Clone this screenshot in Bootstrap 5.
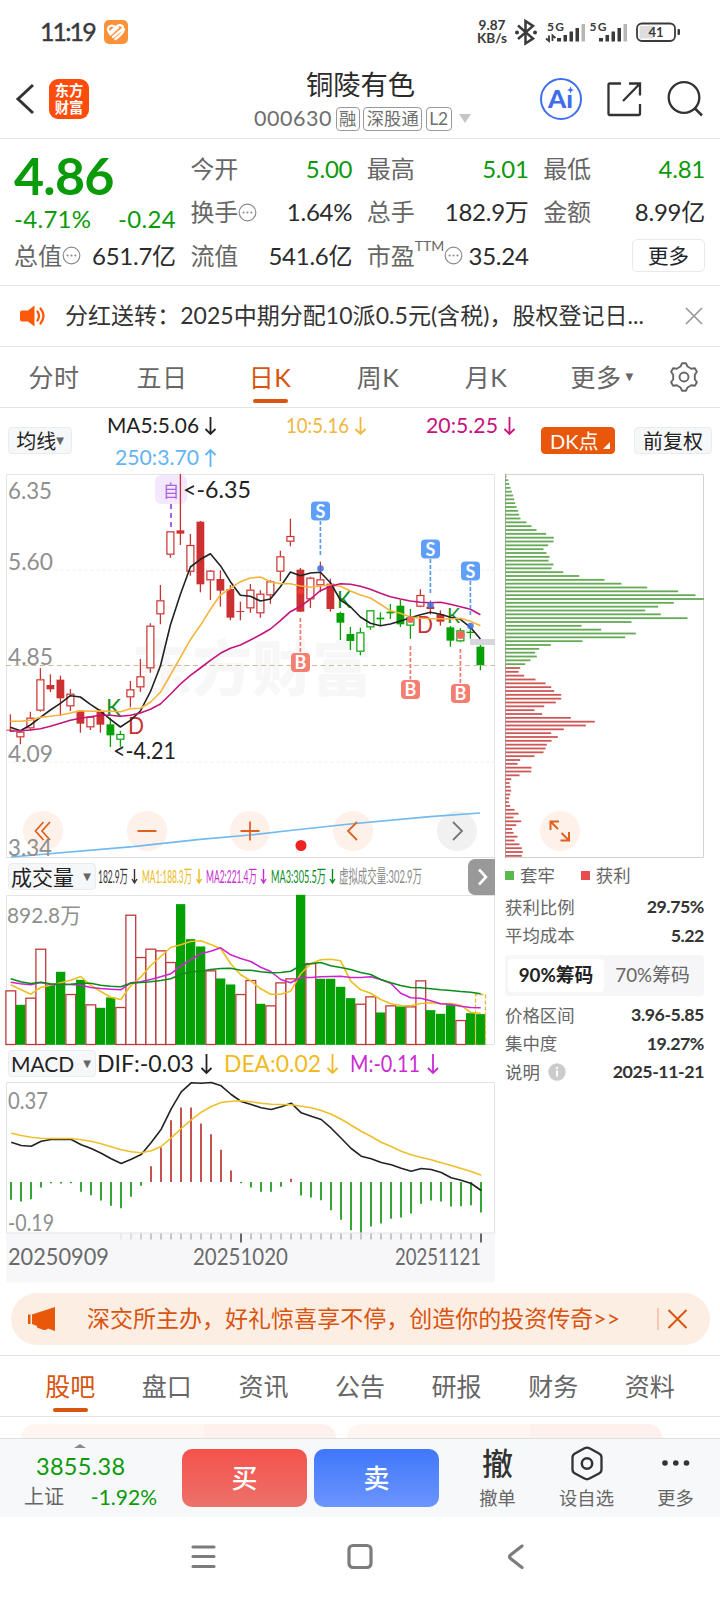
<!DOCTYPE html>
<html lang="zh-CN">
<head>
<meta charset="utf-8">
<meta name="viewport" content="width=device-width, initial-scale=1">
<title>铜陵有色 000630</title>
<link href="https://cdn.jsdelivr.net/npm/bootstrap@5.3.0/dist/css/bootstrap.min.css" rel="stylesheet">
<style>
  body{font-family:Lato,"Noto Sans CJK SC",sans-serif;color:#2b2b2b;background:#fff;width:720px;line-height:1;overflow-x:hidden}
  svg{display:block;flex:none;overflow:visible}
  svg text{font-family:Lato,"Noto Sans CJK SC",sans-serif}
  .dn{color:#0a9a0a}
  .lb{color:#666}
  .org{color:#d9540f}
  .line-b{border-bottom:1px solid #e4e4e4}
  .status{height:60px;padding:3px 37px 0 40px}
  .clock{font-size:25px;letter-spacing:-1.9px;width:64px;color:#3a3a3a;-webkit-text-stroke:.4px #3a3a3a}
  .net{font-size:13.6px;line-height:12.5px;font-weight:700;color:#3a3a3a;margin-right:5px}
  .topbar{height:79px;padding:0 17px 0 15px}
  .logo{width:40px;height:40px;border-radius:9px;background:#ff4c0a;color:#fff;font-weight:700;font-size:14.3px;line-height:17px;padding-top:3px}
  .side{width:186px}
  .stock{font-size:27.3px;color:#2b2b2b;margin-left:-20px}
  .coderow{gap:3.5px;margin:8px 0 0 -16px}
  .code{font-size:21.5px;letter-spacing:.55px;color:#6e6e6e}
  .tag{border:1px solid #999;border-radius:4px;font-size:17.3px;height:24px;padding:0 2.5px;color:#6e6e6e;line-height:21px}
  .quote{height:147px;padding:8px 15px 0 14px;gap:14.5px;font-size:24px}
  .quote>div{flex:1 1 0;min-width:0}
  .quote .cell{height:43.5px}
  .quote .v{letter-spacing:-.25px;white-space:nowrap}
  .price{font-size:52px;font-weight:700;letter-spacing:-.8px;height:57px;line-height:57px}
  .quote .chg{height:30px;font-size:24px}
  .quote .chg .v{letter-spacing:.3px}
  .more{font-size:20.5px;width:73px;height:33px;border:1px solid #e9e9e9;border-radius:5px;padding:0;line-height:1}
  .ttm{font-size:14px;position:relative;top:-10px}
  .notice{height:61px;padding:0 17px 0 20px;font-size:22.8px}
  .ptabs{height:61px;font-size:25px;color:#666;letter-spacing:.5px}
  .ptabs>div{width:108px;height:60px}
  .ul::after{content:"";position:absolute;left:50%;bottom:4px;width:35px;height:4px;margin-left:-17px;border-radius:2px;background:#d9540f}
  .ma{height:65px;padding:0 8px}
  .pill{background:#f6f7f9;border:1px solid #e9ebee;border-radius:4px;font-size:20px;height:27px;line-height:1;padding:0;color:#222}
  .pill-dk{background:#e8570a;border-color:#e8570a;color:#fff}
  .pick{width:88px;font-size:21px;padding:0 4px 0 2px}
  .tri{font-size:10px;color:#666;font-family:"DejaVu Sans"}
  .colL{width:495px}
  .colR{width:225px;padding-right:16px;padding-left:10px}
  .sub{height:37px}
  .kv{height:28.5px;font-size:17.4px}
  .kv b{font-weight:700;font-size:17.8px;color:#333;letter-spacing:-.45px}
  .legend{height:35px}
  .seg{height:41px;background:#f6f6f9;border-radius:4px;padding:4px 3px;font-size:18.8px;margin:5px 0 5px}
  .seg>div{width:96px}
  .seg .on{background:#fff;border-radius:4px;font-weight:700;color:#222}
  .banner{height:52px;margin:11px 10px 10px 11px;border-radius:26px;background:#fdeee4;font-size:23px;padding:0 22px 0 17px}
  .btabs{height:62px;border-top:1px solid #e4e4e4;border-bottom:1px solid #e4e4e4;padding:0 22px;font-size:25px;color:#666}
  .btabs .ul::after{bottom:4px}
  .strip{height:21px;padding:7px 58px 0 21px;gap:11px;overflow:hidden}
  .strip>div{flex:1;height:20px;border-radius:14px 14px 0 0;background:linear-gradient(90deg,#fff6f2 0 58%,#fdf0ed 58%)}
  .dock{height:79px;background:#f7f8fa;border-top:1px solid #dfe0e2}
  .idx{width:182px}
  .trade{width:125px;height:58px;border:0;border-radius:10px;color:#fff;font-size:26px;font-weight:500;padding:0;line-height:1;margin-top:10px}
  .buy{background:linear-gradient(#f4524b,#ec716a)}
  .sell{background:linear-gradient(#3f77fb,#6c95fe)}
  .tool{width:89px;font-size:18.3px;color:#666;padding-top:5px}
  .tool .ic{height:38px;margin-bottom:7px}
</style>
</head>
<body>

<div class="status d-flex align-items-center">
  <span class="clock">11:19</span>
  <svg width="24" height="24" viewBox="0 0 24 24"><rect width="24" height="24" rx="5" fill="#fb923a"/><path d="M12 8C9 4 4 5.500 4 9.500l1.500 3.500L11.500 7M6.500 14.500L14 7.500M9 17L19 8.500C19.500 5 15 4 12 7M11.500 19C15 16.500 18.500 13.500 20 9.500" fill="none" stroke="#fff" stroke-width="2.300" stroke-linecap="round" stroke-linejoin="round"/></svg>
  <div class="net ms-auto text-center">9.87<br>KB/s</div>
  <svg width="171" height="30" viewBox="512 16 171 30">
    <path d="M518 24.500l15 13-7.500 5V20l7.500 5-15 13" fill="none" stroke="#3a3a3a" stroke-width="2.500"/>
    <circle cx="517" cy="31.500" r="2" fill="#3a3a3a"/><circle cx="535" cy="31.500" r="2" fill="#3a3a3a"/>
    <g font-size="12" font-weight="700" fill="#3a3a3a"><text x="547" y="30" textLength="17">5G</text><text x="589.500" y="30" textLength="17">5G</text></g>
    <path d="M549 34.500v5.500l-3-2.500M552.500 40v-5.500l3 2.500" fill="none" stroke="#3a3a3a" stroke-width="1.800"/>
    <path d="M557 37h4v3.500h-4zM563.500 34h3.500v6.500h-3.500zM569.500 30.500h3.500v10h-3.500zM575.500 27h3.500v13.500h-3.500zM599 37h4v3.500h-4zM605.500 34h3.500v6.500h-3.500zM611.500 30.500h3.500v10h-3.500zM617.500 27h3.500v13.500h-3.500z" fill="#3a3a3a"/>
    <path d="M581.500 23h3.500v17.500h-3.500zM623.500 23h3.500v17.500h-3.500z" fill="#b5b5b5"/>
    <rect x="637" y="22.500" width="38" height="17.500" rx="5" fill="none" stroke="#3a3a3a" stroke-width="1.800"/><path d="M639.500 25h14v12.500h-14z" fill="#dedede"/><rect x="677.500" y="28" width="2.500" height="6" rx="1" fill="#3a3a3a"/>
    <text x="648.500" y="36" font-size="13" font-weight="700" textLength="15" fill="#3a3a3a">41</text>
  </svg>
</div>

<div class="topbar d-flex align-items-center line-b">
  <div class="side d-flex align-items-center">
    <svg width="34" height="34" viewBox="0 0 34 34"><path d="M18 3L3 17l15 14" fill="none" stroke="#333" stroke-width="3"/></svg>
    <div class="logo text-center">东方<br>财富</div>
  </div>
  <div class="flex-fill d-flex flex-column align-items-center pt-1">
    <div class="stock">铜陵有色</div>
    <div class="coderow d-flex align-items-center">
      <span class="code">000630</span><span class="tag">融</span><span class="tag">深股通</span><span class="tag">L2</span>
      <svg class="ms-1" width="12" height="9" viewBox="0 0 12 9"><path d="M0 0h12L6 9z" fill="#c6c6c6"/></svg>
    </div>
  </div>
  <div class="d-flex align-items-center" style="gap:25px">
    <svg width="42" height="42" viewBox="0 0 42 42"><circle cx="21" cy="21" r="20" fill="none" stroke="#3f6df0" stroke-width="2"/><text x="8" y="29.500" font-size="24" font-weight="900" fill="#3f6df0" textLength="25" lengthAdjust="spacingAndGlyphs">Aı</text><path d="M30.500 8.500l1 2.500 2.500 1-2.500 1-1 2.500-1-2.500-2.500-1 2.500-1z" fill="#3f6df0"/></svg>
    <svg width="35" height="35" viewBox="0 0 35 35"><path d="M14 1.500H2.500a1 1 0 0 0-1 1V32a1 1 0 0 0 1 1H32a1 1 0 0 0 1-1V22M22 1.500h11v12M33 1.500L16 19" fill="none" stroke="#333" stroke-width="2.300"/></svg>
    <svg width="36" height="36" viewBox="0 0 36 36"><circle cx="17" cy="16.500" r="15.300" fill="none" stroke="#333" stroke-width="2.300"/><path d="M28 27.500l7 7" stroke="#333" stroke-width="2.500"/></svg>
  </div>
</div>

<div class="quote d-flex line-b">
  <div>
    <div class="price dn">4.86</div>
    <div class="chg dn d-flex justify-content-between align-items-center"><span class="v">-4.71%</span><span class="v">-0.24</span></div>
    <div class="cell d-flex align-items-center"><span class="lb">总值</span><svg width="19" height="19" viewBox="0 0 18 18"><use href="#dots"/></svg><span class="v ms-auto">651.7亿</span></div>
  </div>
  <div>
    <div class="cell d-flex align-items-center justify-content-between"><span class="lb">今开</span><span class="v dn">5.00</span></div>
    <div class="cell d-flex align-items-center"><span class="lb">换手</span><svg width="19" height="19" viewBox="0 0 18 18"><use href="#dots"/></svg><span class="v ms-auto">1.64%</span></div>
    <div class="cell d-flex align-items-center justify-content-between"><span class="lb">流值</span><span class="v">541.6亿</span></div>
  </div>
  <div>
    <div class="cell d-flex align-items-center justify-content-between"><span class="lb">最高</span><span class="v dn">5.01</span></div>
    <div class="cell d-flex align-items-center justify-content-between"><span class="lb">总手</span><span class="v">182.9万</span></div>
    <div class="cell d-flex align-items-center"><span class="lb">市盈</span><span class="ttm lb">TTM</span><svg width="19" height="19" viewBox="0 0 18 18"><use href="#dots"/></svg><span class="v ms-auto">35.24</span></div>
  </div>
  <div>
    <div class="cell d-flex align-items-center justify-content-between"><span class="lb">最低</span><span class="v dn">4.81</span></div>
    <div class="cell d-flex align-items-center justify-content-between"><span class="lb">金额</span><span class="v">8.99亿</span></div>
    <div class="cell d-flex align-items-center justify-content-end"><button class="btn more">更多</button></div>
  </div>
</div>
<svg width="0" height="0" class="position-absolute"><defs><g id="dots"><circle cx="9" cy="9" r="7.900" fill="none" stroke="#8a8a8a" stroke-width="1.100"/><g fill="#8a8a8a"><circle cx="5.300" cy="9" r="1"/><circle cx="9" cy="9" r="1"/><circle cx="12.700" cy="9" r="1"/></g></g></defs></svg>

<div class="notice d-flex align-items-center line-b">
  <svg width="26" height="22" viewBox="0 0 26 22"><path d="M2 5.500h6L14.500 0.500v21L8 16.500H2a2 2 0 0 1-2-2v-7a2 2 0 0 1 2-2z" fill="#fa5a0a"/><path d="M17.500 6.500q3 4.500 0 9M20.500 3.500q6 7.500 0 15" fill="none" stroke="#fa5a0a" stroke-width="2.300" stroke-linecap="round"/></svg>
  <svg width="580" height="34" viewBox="66 0 580 34" style="margin-left:20px"><text x="65" y="25" font-size="23" fill="#333" textLength="579">分红送转：2025中期分配10派0.5元(含税)，股权登记日...</text></svg>
  <svg class="ms-auto" width="18" height="18" viewBox="0 0 18 18"><path d="M1 1l16 16M17 1L1 17" stroke="#999" stroke-width="1.700"/></svg>
</div>

<div class="ptabs d-flex line-b">
  <div class="d-flex align-items-center justify-content-center">分时</div>
  <div class="d-flex align-items-center justify-content-center">五日</div>
  <div class="d-flex align-items-center justify-content-center org ul position-relative">日K</div>
  <div class="d-flex align-items-center justify-content-center">周K</div>
  <div class="d-flex align-items-center justify-content-center">月K</div>
  <div class="d-flex align-items-center justify-content-center ps-2 ms-1">更多<span class="tri ms-1">▼</span></div>
  <svg class="my-auto" style="margin-left:17px" width="30" height="30" viewBox="0 0 30 30"><path d="M11.500 4.500L13 1.300h4l1.500 3.200 3.800 2.200 3.600-.5 2 3.600-2.100 2.900v4.600l2.100 2.900-2 3.600-3.600-.5-3.800 2.200L17 28.700h-4l-1.500-3.200-3.800-2.200-3.600.5-2-3.600 2.100-2.900v-4.600L2.100 9.800l2-3.600 3.600.5z" fill="none" stroke="#666" stroke-width="1.900" stroke-linejoin="round"/><circle cx="15" cy="15" r="4.500" fill="none" stroke="#666" stroke-width="1.900"/></svg>
</div>

<div class="ma d-flex align-items-center">
  <button class="btn pill d-flex align-items-center justify-content-center" style="width:64px">均线<span class="tri">▼</span></button>
  <svg width="469" height="65" viewBox="72 408 469 65" font-size="22">
    <text x="107" y="433" fill="#222" textLength="92" lengthAdjust="spacingAndGlyphs">MA5:5.06</text><text x="286" y="433" fill="#efb73f" textLength="63" lengthAdjust="spacingAndGlyphs">10:5.16</text><text x="426" y="433" fill="#c8127f" textLength="72" lengthAdjust="spacingAndGlyphs">20:5.25</text><text x="115" y="465" fill="#62b4f2" textLength="84" lengthAdjust="spacingAndGlyphs">250:3.70</text>
    <g fill="none" stroke-width="1.800"><path d="M210.500 417v17m-5-5l5 5 5-5" stroke="#222"/><path d="M360.500 417v17m-5-5l5 5 5-5" stroke="#efb73f"/><path d="M509.500 417v17m-5-5l5 5 5-5" stroke="#c8127f"/><path d="M210.500 467v-17m-5 5l5-5 5 5" stroke="#62b4f2"/></g>
  </svg>
  <button class="btn pill pill-dk d-flex align-items-center ps-2" style="width:74px">DK点<svg class="ms-auto mt-auto mb-1 me-1" width="7" height="7" viewBox="0 0 7 7"><path d="M7 0v7H0z" fill="#fff"/></svg></button>
  <button class="btn pill ms-auto" style="width:78px">前复权</button>
</div>

<div class="d-flex">
  <div class="colL">
    <svg id="kline" width="495" height="385" viewBox="0 473 495 385"></svg>
    <div class="sub d-flex align-items-center">
      <button class="btn pill pick ms-2 d-flex align-items-center justify-content-between">成交量<span class="tri">▼</span></button>
      <svg width="372" height="37" viewBox="96 858 372 37" font-size="18" stroke-width="1.400">
        <text x="98" y="883" fill="#333" textLength="30" lengthAdjust="spacingAndGlyphs">182.9万</text><text x="142" y="883" fill="#e8b920" textLength="50" lengthAdjust="spacingAndGlyphs">MA1:188.3万</text><text x="206" y="883" fill="#c92bd2" textLength="51" lengthAdjust="spacingAndGlyphs">MA2:221.4万</text><text x="271" y="883" fill="#0a8c1c" textLength="55" lengthAdjust="spacingAndGlyphs">MA3:305.5万</text><text x="339" y="883" fill="#8a8a8a" textLength="83" lengthAdjust="spacingAndGlyphs">虚拟成交量:302.9万</text>
        <g fill="none"><path d="M134.500 869v14m-2.500-4l2.500 4 2.500-4" stroke="#333"/><path d="M199 869v14m-2.500-4l2.500 4 2.500-4" stroke="#e8b920"/><path d="M263.500 869v14m-2.500-4l2.500 4 2.500-4" stroke="#c92bd2"/><path d="M332.500 869v14m-2.500-4l2.500 4 2.500-4" stroke="#0a8c1c"/></g>
      </svg>
      <svg width="27" height="36" viewBox="0 0 27 36"><path d="M27 0H7a7 7 0 0 0-7 7v22a7 7 0 0 0 7 7h20z" fill="#999"/><path d="M11 10.500l7 7.500-7 7.500" fill="none" stroke="#fff" stroke-width="2.600"/></svg>
    </div>
    <svg id="vol" width="495" height="150" viewBox="0 894.500 495 150"></svg>
    <div class="sub d-flex align-items-center">
      <button class="btn pill pick ms-2 d-flex align-items-center justify-content-between">MACD<span class="tri">▼</span></button>
      <svg width="399" height="37" viewBox="96 1045 399 37" font-size="23.500">
        <text x="97" y="1072" fill="#222" textLength="97" lengthAdjust="spacingAndGlyphs">DIF:-0.03</text><text x="224" y="1072" fill="#efbb20" textLength="97" lengthAdjust="spacingAndGlyphs">DEA:0.02</text><text x="350" y="1072" fill="#c92bd2" textLength="70" lengthAdjust="spacingAndGlyphs">M:-0.11</text>
        <g fill="none" stroke-width="1.800"><path d="M206.500 1054v19m-5-5l5 5 5-5" stroke="#222"/><path d="M332.500 1054v19m-5-5l5 5 5-5" stroke="#efbb20"/><path d="M433 1054v19m-5-5l5 5 5-5" stroke="#c92bd2"/></g>
      </svg>
    </div>
    <svg id="macd" width="495" height="200" viewBox="0 1081.500 495 200"></svg>
  </div>

  <div class="colR">
    <svg id="chips" width="199" height="385" viewBox="505 473 199 385"></svg>
    <div class="kv legend d-flex align-items-center lb"><svg width="9" height="9"><rect width="9" height="9" fill="#5cb84a"/></svg><span style="margin-left:6px">套牢</span><svg width="9" height="9" style="margin:0 6px 0 26px"><rect width="9" height="9" fill="#e84c4c"/></svg>获利</div>
    <div class="kv d-flex align-items-center justify-content-between"><span class="lb">获利比例</span><b>29.75%</b></div>
    <div class="kv d-flex align-items-center justify-content-between"><span class="lb">平均成本</span><b>5.22</b></div>
    <div class="seg d-flex"><div class="on d-flex align-items-center justify-content-center">90%筹码</div><div class="lb flex-fill d-flex align-items-center justify-content-center">70%筹码</div></div>
    <div class="kv d-flex align-items-center justify-content-between"><span class="lb">价格区间</span><b>3.96-5.85</b></div>
    <div class="kv d-flex align-items-center justify-content-between"><span class="lb">集中度</span><b>19.27%</b></div>
    <div class="kv d-flex align-items-center"><span class="lb">说明</span><svg style="margin-left:8px" width="18" height="18" viewBox="0 0 18 18"><circle cx="9" cy="9" r="8.700" fill="#ccc"/><path d="M9 7.500V13.500M9 4v2" fill="none" stroke="#fff" stroke-width="1.900"/></svg><b class="ms-auto">2025-11-21</b></div>
  </div>
</div>

<div class="banner d-flex align-items-center org">
  <svg width="28" height="24" viewBox="0 0 28 24"><path d="M0 7.500h2.500V17H0zM4 7.500L27 0v24l-7-2.500q-2 2-4.500 1.500L9 20.500V19l-5-2z" fill="#e8570a"/></svg>
  <svg width="540" height="34" viewBox="0 0 540 34" style="margin-left:30px"><text x="1" y="25" font-size="23" fill="#d9540f" textLength="533">深交所主办，好礼惊喜享不停，创造你的投资传奇&gt;&gt;</text></svg>
  <svg class="ms-auto" width="31" height="22" viewBox="0 0 31 22"><path d="M1 0v22" stroke="#eaa27c" stroke-width="1"/><path d="M11.500 2l18 18M29.500 2l-18 18" stroke="#d9540f" stroke-width="2"/></svg>
</div>

<div class="btabs d-flex">
  <div class="col d-flex align-items-center justify-content-center org ul position-relative">股吧</div>
  <div class="col d-flex align-items-center justify-content-center">盘口</div>
  <div class="col d-flex align-items-center justify-content-center">资讯</div>
  <div class="col d-flex align-items-center justify-content-center">公告</div>
  <div class="col d-flex align-items-center justify-content-center">研报</div>
  <div class="col d-flex align-items-center justify-content-center">财务</div>
  <div class="col d-flex align-items-center justify-content-center">资料</div>
</div>
<div class="strip d-flex"><div></div><div></div></div>

<div class="dock d-flex">
  <div class="idx">
    <svg style="margin:5px 0 0 74px" width="12" height="4" viewBox="0 0 12 4"><path d="M0 4L6 0l6 4z" fill="#888"/></svg>
    <div class="dn" style="font-size:23.500px;margin:7px 0 0 36px;letter-spacing:.3px">3855.38</div>
    <div class="d-flex align-items-center" style="margin:7px 25px 0 24px"><span class="lb" style="font-size:20px">上证</span><span class="dn ms-auto" style="font-size:21px">-1.92%</span></div>
  </div>
  <button class="btn trade buy" style="margin-right:7px">买</button>
  <button class="btn trade sell">卖</button>
  <div class="tool text-center" style="margin-left:14px"><div class="ic d-flex align-items-center justify-content-center fw-medium" style="font-size:31px;color:#333">撤</div>撤单</div>
  <div class="tool text-center"><div class="ic d-flex align-items-center justify-content-center"><svg width="32" height="35" viewBox="0 0 32 35"><path d="M13.500 2.200q2.500-1.300 5 0l9.500 5.200q2.500 1.400 2.500 4v12q0 2.600-2.500 4l-9.500 5.200q-2.500 1.300-5 0L4 27.400q-2.500-1.400-2.500-4v-12q0-2.600 2.500-4z" fill="none" stroke="#333" stroke-width="2.300"/><circle cx="16" cy="17.500" r="5.200" fill="none" stroke="#333" stroke-width="2.500"/></svg></div>设自选</div>
  <div class="tool text-center"><div class="ic d-flex align-items-center justify-content-center"><svg width="28" height="6" viewBox="0 0 28 6" fill="#333"><circle cx="3" cy="3" r="2.800"/><circle cx="13.800" cy="3" r="2.800"/><circle cx="24.500" cy="3" r="2.800"/></svg></div>更多</div>
</div>
<svg width="720" height="83" viewBox="0 1517 720 83" fill="none" stroke="#7c7c7c" stroke-width="3.200" stroke-linecap="round" stroke-linejoin="round"><path d="M193 1547h21M193 1556.500h21M193 1566.500h21M522 1546l-11.500 9q-2 2 0 3.500l11.500 9"/><rect x="349" y="1545.500" width="22" height="22" rx="4"/></svg>

<script src="https://cdn.jsdelivr.net/npm/bootstrap@5.3.0/dist/js/bootstrap.bundle.min.js"></script>
<script>
const R='#cc3030', G='#04a004', X=i=>10.4+i*10;
const put=(id,s)=>document.getElementById(id).innerHTML=s;
const line=(a,base,c,dx=0,w=1.6)=>`<polyline fill="none" stroke="${c}" stroke-width="${w}" stroke-linejoin="round" points="${a.map((v,i)=>(X(i)+dx).toFixed(1)+','+(base+v/3).toFixed(1)).join(' ')}"/>`;
const txt=(x,y,s,w,c='#8f8f8f',z=23,e='')=>`<text x="${x}" y="${y}" font-size="${z}" fill="${c}" textLength="${w}" lengthAdjust="spacingAndGlyphs" ${e}>${s}</text>`;

/* Candles: kind (h hollow red, r red, g green, o hollow green), high, body top, body bottom, low */
const K=`r748,794,797,801 h795,800,817,838 h740,758,790,798 h610,643,737,740 r628,660,673,681 r632,644,700,753 h672,686,724,738 r737,737,776,803
h754,755,787,795 r733,740,779,803 g758,778,811,846 o797,807,824,845 h648,673,697,727 h582,634,667,680 h475,482,610,623 h360,406,448,478
h198,199,269,278 r27,196,206,240 h207,240,320,332 r168,170,358,382 h315,317,346,405 r316,342,377,425 r360,372,458,466 r410,438,441,466
h357,374,430,443 h376,386,445,458 h345,349,391,416 h257,274,320,348 h161,213,230,244 r309,314,440,441 h335,338,403,429 h290,343,361,382
r341,356,432,440 g440,444,473,525 g486,507,528,555 o488,502,560,571 o435,436,487,494 g442,458,463,482 g417,440,445,462 g405,422,478,486
o432,457,482,521 h373,390,425,427 r407,425,432,448 r436,448,470,482 g483,487,527,545 o490,496,529,532 g485,500,504,521 g540,545,600,616`.split(/\s+/);
const ma5=[787,797,780,757,735,715,692,696,718,738,763,786,766,738,680,603,480,388,306,283,266,302,350,391,394,408,402,365,321,332,324,322,353,405,425,456,475,482,477,468,458,449,442,448,457,463,487,522];
const ma10=[769,769,766,757,754,750,744,737,739,738,739,740,731,730,712,682,630,577,524,481,433,390,370,350,339,336,350,356,356,363,367,363,360,364,378,390,399,418,437,445,456,460,461,461,462,460,469,482];
const ma20=[799,797,795,791,784,775,766,760,755,751,751,754,751,744,733,717,688,657,631,609,586,565,550,540,525,509,492,467,440,424,402,377,364,356,358,364,373,385,395,402,408,412,413,412,418,425,433,449];

let s='<path d="M6.500 858V474.500H494.500V858" fill="none" stroke="#e6e6e6"/><path d="M6 857.500h489" stroke="#ddd"/>';
s+='<text x="132" y="691" font-size="60" font-weight="900" fill="#f7f7f7" textLength="240">东方财富</text>';
s+='<path d="M6 570h489M6 762h489" stroke="#f0f0f0" stroke-dasharray="4 2"/><path d="M6 665.500h489" stroke="#d3b896" stroke-dasharray="5 3.500"/>';
[43,147,250,353].forEach(x=>s+=`<circle cx="${x}" cy="831" r="20" fill="#fef1e9"/>`);
s+='<circle cx="457" cy="831" r="20" fill="#f1f1f1"/><circle cx="301" cy="845.500" r="5.500" fill="#ee2222"/>';
s+='<polyline points="11,857 133,846.700 200,839.300 250,835 290,830.500 350,824 430,816.700 480,813" fill="none" stroke="#6fbaf0" stroke-width="1.700"/>';
s+='<g fill="none" stroke="#dd6222" stroke-width="1.800"><path d="M43.500 822l-8 9 8 9M50 822l-8 9 8 9M137.500 831h19M240.500 831h19M250 821.500v19M357 822l-9 9 9 9"/><path d="M453 822l9 9-9 9" stroke="#777"/></g>';
s+='<rect x="470" y="639" width="25" height="6" fill="#d5d7dc"/>';
s+='<rect x="155" y="475" width="32" height="29" rx="6" fill="#f3e8fd"/>';
K.forEach((k,i)=>{const t=k[0],[h,a,b,l]=k.slice(1).split(',').map(v=>465+v/3),c='hr'.includes(t)?R:G,x=X(i);
  if('rg'.includes(t)) s+=`<path d="M${x} ${h}V${l}" stroke="${c}" stroke-width="1.300"/><rect x="${x-3.9}" y="${a}" width="7.800" height="${Math.max(1,b-a)}" fill="${c}"/>`;
  else s+=`<path d="M${x} ${h}V${a}M${x} ${b}V${l}" stroke="${c}" stroke-width="1.300"/><rect x="${x-3.5}" y="${a+.5}" width="7" height="${Math.max(2,b-a-1)}" fill="#fff" stroke="${c}" stroke-width="1.200"/>`;});
s+=txt(106,716,'K',15,'#15911f',23)+txt(128,734,'D',16,'#c93030',24)+txt(337,608,'K',14,'#15911f',23)+txt(417,632.5,'D',16,'#c93030',24)+txt(447,622.5,'K',13,'#15911f',22);
s+=line(ma5,465,'#222')+line(ma10,465,'#f6b43c')+line(ma20,465,'#c3137c');
s+=txt(8,498.500,'6.35',44)+txt(8,570,'5.60',45)+txt(8,665,'4.85',45)+txt(8,762,'4.09',45)+txt(8,855.500,'3.34',44);
s+=txt(183,497.500,'&lt;-6.35',68,'#222',24)+txt(113,758.500,'&lt;-4.21',63,'#222',24);
s+=txt(163,496.500,'自',16,'#a565e0',17)+'<path d="M171 504v27" stroke="#a565e0" stroke-width="2" stroke-dasharray="5 4"/>';
[[320,511,565],[430,549,604],[470,571,625]].forEach(([x,y,d])=>s+=`<path d="M${x+.4} ${y+10}V${d-10}" stroke="#5b9af0" stroke-width="1.700" stroke-dasharray="4 2"/><rect x="${x-9}" y="${y-9.5}" width="19" height="19" rx="4" fill="#609ff8"/><text x="${x+.5}" y="${y+6.5}" text-anchor="middle" font-size="18" font-weight="700" fill="#fff">S</text>`);
s+='<g fill="#3e6fe0" opacity=".85"><circle cx="320.500" cy="568.500" r="3.300"/><circle cx="430.500" cy="605" r="3.300"/><circle cx="470.500" cy="626" r="3.300"/></g>';
[[300,662.500,618],[410,689.500,646],[460,693.500,649]].forEach(([x,y,d])=>s+=`<path d="M${x+.4} ${d}V${y-10}" stroke="#f27a6c" stroke-width="1.700" stroke-dasharray="4 2"/><rect x="${x-9}" y="${y-9.5}" width="19" height="19" rx="4" fill="#f47e70"/><text x="${x+.5}" y="${y+6.5}" text-anchor="middle" font-size="18" font-weight="700" fill="#fff">B</text>`);
s+='<g fill="#f4685a"><circle cx="300.500" cy="591.500" r="3" fill="#f03a2a"/><circle cx="410.500" cy="619.500" r="3.500"/><circle cx="460.500" cy="635" r="4"/></g>';
put('kline',s);

/* Volume */
const V='r422 g465 r444 r297 g405 g366 r433 g390 r464 g474 g443 r472 r195 r322 r297 r302 r337 g163 g268 g290 r362 g386 g404 r433 r391 g462 r467 r398 r386 g135 r340 g387 g387 g411 g445 r462 r440 g488 r467 g470 r470 r392 g481 g492 g466 r511 g490 g493'.split(' ');
const v1=[403,417,431,411,404,397,389,378,404,423,440,447,406,380,345,318,291,283,273,271,282,294,340,373,391,415,431,431,422,370,340,328,326,331,392,418,428,447,460,465,466,459,457,460,459,464,486,488];
const v2=[395,400,403,396,402,402,402,404,411,414,416,418,397,394,387,379,370,347,328,310,302,292,313,324,333,350,363,387,397,381,381,379,378,377,381,381,379,387,398,428,442,443,451,460,462,467,471,472];
const v3=[385,394,399,395,400,402,401,398,398,404,407,409,398,396,394,390,385,372,364,362,357,354,353,359,359,364,367,366,362,345,340,336,346,351,357,366,372,387,397,405,411,412,415,418,420,423,425,430];
s='<path d="M6.500 895h488v149h-488z" fill="none" stroke="#e4e4e4"/>';
V.forEach((k,i)=>{const y=850+(+k.slice(1))/3,x=X(i)+.1;
  s+=k[0]=='r'?`<rect x="${x-4.6}" y="${y-.3}" width="9.800" height="${1044.3-y}" fill="#fff" stroke="#bd3a3a" stroke-width="1.300"/>`:`<rect x="${x-4.5}" y="${y-.7}" width="9.300" height="${1045-y}" fill="${G}"/>`;});
s+='<path d="M475.500 1044V994h10v50" fill="none" stroke="#e0b83a" stroke-width="1.300" stroke-dasharray="4 2"/>';
s+=line(v1,850,'#efbf1f',.3)+line(v2,850,'#cb25cf',.3)+line(v3,850,'#0a8c1c',.3)+txt(7,922,'892.8万',74,'#8f8f8f',22);
put('vol',s);

/* MACD */
const M=[1048,1053,1046,1011,998,999,998,1024,1034,1050,1066,1073,1039,1006,947,891,809,771,771,819,851,898,960,998,1011,1024,1024,1009,985,1035,1041,1049,1079,1108,1139,1146,1128,1119,1105,1101,1089,1060,1050,1053,1068,1067,1064,1086];
const dif=[875,885,887,872,867,866,867,883,894,908,925,939,926,912,876,836,775,724,697,698,696,706,732,753,762,772,777,769,758,787,797,807,833,863,894,917,925,936,943,953,962,954,957,966,982,989,999,1020];
const dea=[848,855,860,863,864,864,864,868,872,880,889,898,904,907,901,888,862,834,808,785,768,756,752,751,754,758,761,762,763,767,772,780,791,806,824,842,858,875,888,902,913,921,928,937,945,954,963,974];
s='<path d="M6 1233h489v49H6z" fill="#f7f7fa"/><path d="M6.500 1082h488v150.500h-488z" fill="none" stroke="#e2e2e2"/>';
M.forEach((v,i)=>{s+=`<path d="M${X(i)+.6} 1181.500V${850+v/3}" stroke="${v<994?'#c0403c':'#1f9e1f'}" stroke-width="1.800"/>`;});
s+=line(dif,850,'#222',.8)+line(dea,850,'#efbf2a',.8)+txt(8,1108,'0.37',40)+txt(8,1230,'-0.19',46);
for(let i=11;i<48;i++){const big=i==23||i==47;s+=`<path d="M${X(i)+.6} 1233v${big?9:6}" stroke="${big?'#666':'#aaa'}" stroke-width="${big?2:1.3}" opacity="${i<14?(i-10)/4:1}"/>`;}
s+=txt(8,1264,'20250909',101,'#6a6a6a')+txt(193,1264,'20251020',95,'#6a6a6a')+txt(395,1264,'20251121',86,'#6a6a6a');
put('macd',s);

/* Cost distribution: right edge of each bar */
const C=[49,54,57,61,65,69,72,75,79,84,87,91,109,124,139,168,191,190,174,160,169,178,175,190,184,219,267,343,394,471,564,616,641,551,504,465,512,592,424,274,333,437,405,277,182,147,135,140,121,105,
90,85,102,136,166,183,192,213,213,197,162,133,156,242,314,287,221,183,203,184,170,166,160,133,90,82,124,123,88,63,58,61,63,60,57,56,60,73,85,70,93,78,66,70,82,73,88,95,98,95];
s='<path d="M505.500 474.500h198v383h-198z" fill="none" stroke="#d2d2d2"/><path d="M505.500 474v384" stroke="#aaa"/>';
C.forEach((v,i)=>{s+=`<rect x="505.500" y="${(465+(34+i*11.5)/3-.9).toFixed(2)}" width="${((v-46)/3).toFixed(1)}" height="1.800" fill="${i<50?'#64a954':'#cf5656'}"/>`;});
s+='<circle cx="560" cy="831" r="20" fill="#fef1e9"/><path d="M558 829l-7.500-7.500M550.500 830v-8.500h8.500M561.500 833l7.500 7.500M569 832v8.500h-8.500" fill="none" stroke="#e0611c" stroke-width="2"/>';
put('chips',s);
</script>
</body>
</html>
